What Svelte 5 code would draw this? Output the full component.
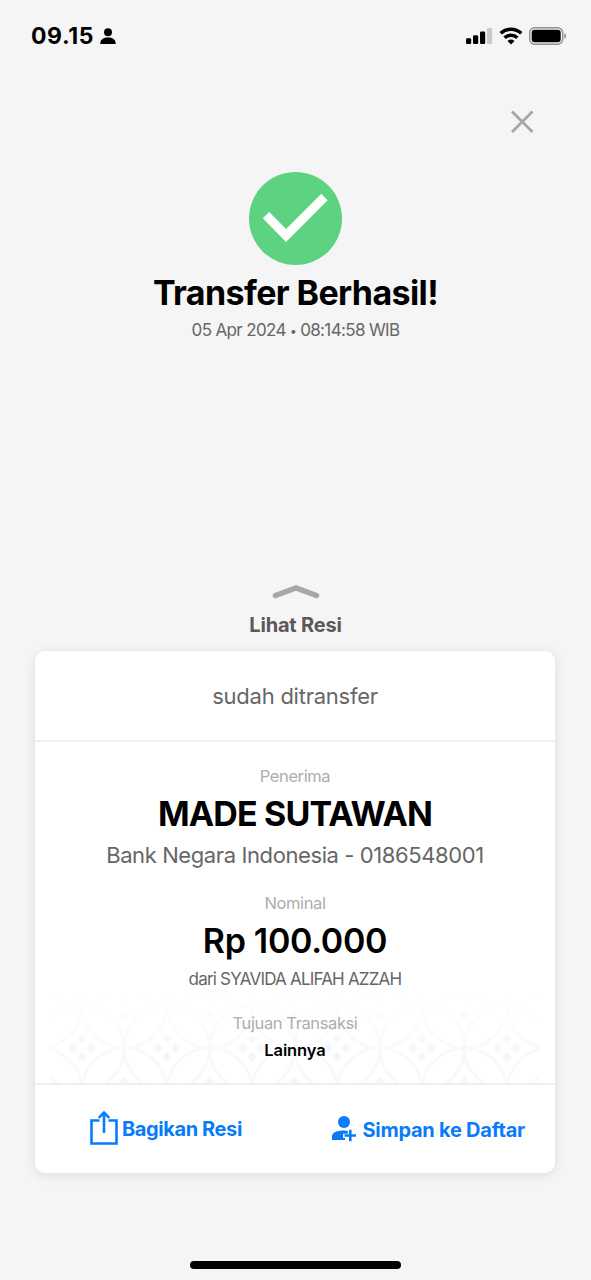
<script lang="ts">
	interface Receipt {
		date: string;
		time: string;
		recipient: string;
		account: string;
		amount: string;
		sender: string;
		purpose: string;
	}

	const receipt: Receipt = {
		date: '05 Apr 2024',
		time: '08:14:58 WIB',
		recipient: 'MADE SUTAWAN',
		account: 'Bank Negara Indonesia - 0186548001',
		amount: 'Rp 100.000',
		sender: 'dari SYAVIDA ALIFAH AZZAH',
		purpose: 'Lainnya'
	};
</script>

<div class="screen">
	<header class="status-bar">
		<div class="clock">
			<span class="time">09.15</span>
			<svg width="16" height="17" viewBox="0 0 16 17">
				<circle cx="8" cy="4.2" r="4" />
				<path d="M.3 15.2C.3 11.5 3.5 9.5 8 9.5s7.700 2 7.700 5.700c0 .6-.4.9-1 .9H1.300c-.6 0-1-.3-1-.9z" />
			</svg>
		</div>
		<div class="indicators">
			<svg width="27" height="18" viewBox="0 0 27 18">
				<rect x="0" y="11.200" width="5.200" height="5.800" rx="1.300" />
				<rect x="7" y="8.200" width="5.200" height="8.800" rx="1.300" />
				<rect x="14" y="4.500" width="5.200" height="12.500" rx="1.300" />
				<rect x="21" y="1" width="5.200" height="16" rx="1.300" fill="#c9c9c9" />
			</svg>
			<svg width="24" height="18" viewBox="0 0 24 18" fill="none" stroke="#000" stroke-width="3.500">
				<path d="M1.700 6.300a14.800 14.800 0 0 1 20.600 0" />
				<path d="M5.600 10.800a9.200 9.200 0 0 1 12.800 0" />
				<path d="M12 17.400 8.500 13.900a5 5 0 0 1 7 0z" fill="#000" stroke="none" />
			</svg>
			<svg width="38" height="18" viewBox="0 0 38 18">
				<rect x=".7" y=".7" width="33" height="16.600" rx="5" fill="none" stroke="#8f8f8f" stroke-width="1.400" />
				<rect x="2.700" y="2.700" width="29" height="12.600" rx="3" />
				<path d="M35.300 6.300c2.400.9 2.400 4.500 0 5.400z" fill="#8f8f8f" />
			</svg>
		</div>
	</header>

	<div class="toolbar">
		<button class="close" aria-label="Tutup">
			<svg width="24" height="24" viewBox="0 0 24 24">
				<path d="M2 1.500 22.500 22M22.500 1.500 2 22" fill="none" stroke="#a8a5a9" stroke-width="2.800" />
			</svg>
		</button>
	</div>

	<section class="result">
		<svg width="93" height="93" viewBox="0 0 93 93">
			<circle cx="46.500" cy="46.500" r="46.500" fill="#5dd280" />
			<path d="M17 43.200 37 63.500 75.500 25" fill="none" stroke="#fff" stroke-width="9" />
		</svg>
		<h1>Transfer Berhasil!</h1>
		<p class="date">{receipt.date} <span class="dot">•</span> {receipt.time}</p>
	</section>

	<button class="expand">
		<svg width="48" height="16" viewBox="0 0 48 16">
			<path d="M3.500 11.500 24 4 44.500 11.500" fill="none" stroke="#aaa5ab" stroke-width="5.500" stroke-linecap="round" />
		</svg>
		<span>Lihat Resi</span>
	</button>

	<main class="card">
		<p class="state">sudah ditransfer</p>

		<div class="details">
			<!-- batik ornament, fades out towards the top -->
			<svg class="ornament" width="490" height="90" viewBox="0 0 490 90">
				<defs>
					<pattern id="kawung" x="-10.500" y="12.500" width="85" height="85" patternUnits="userSpaceOnUse">
						<g fill="none" stroke="#f7f8fc" stroke-width="2.600">
							<circle cx="42.500" cy="42.500" r="42.500" />
							<circle cx="0" cy="0" r="42.500" />
							<circle cx="85" cy="0" r="42.500" />
							<circle cx="0" cy="85" r="42.500" />
							<circle cx="85" cy="85" r="42.500" />
						</g>
						<g fill="#f4f6fc">
							<path d="m42.500 28.500 5 5-5 5-5-5zM42.500 46.500l5 5-5 5-5-5zM33.500 37.500l5 5-5 5-5-5zM51.500 37.500l5 5-5 5-5-5z" />
							<path d="m0 71 5 5-5 5-5-5zM85 71l5 5-5 5-5-5zM0 4l5 5-5 5-5-5zM85 4l5 5-5 5-5-5z" />
						</g>
					</pattern>
					<linearGradient id="fade" x1="0" y1="0" x2="0" y2="1">
						<stop offset="0" stop-color="#fff" stop-opacity=".1" />
						<stop offset=".7" stop-color="#fff" />
					</linearGradient>
					<mask id="ornament-mask">
						<rect width="490" height="90" fill="url(#fade)" />
					</mask>
				</defs>
				<rect width="490" height="90" fill="url(#kawung)" mask="url(#ornament-mask)" />
			</svg>

			<div class="group recipient">
				<span class="label">Penerima</span>
				<strong class="name">{receipt.recipient}</strong>
				<span class="account">{receipt.account}</span>
			</div>
			<div class="group nominal">
				<span class="label">Nominal</span>
				<strong class="amount">{receipt.amount}</strong>
				<span class="sender">{receipt.sender}</span>
			</div>
			<div class="group purpose">
				<span class="label">Tujuan Transaksi</span>
				<strong class="value">{receipt.purpose}</strong>
			</div>
		</div>

		<footer class="actions">
			<button class="share">
				<svg width="28" height="36" viewBox="0 0 28 36" fill="none" stroke="#087cf8" stroke-width="2.600">
					<path d="M9.500 10.500H1.500v23h25v-23h-8" />
					<path d="M14 23V3M8.700 7.800 14 2.500l5.300 5.300" />
				</svg>
				<span>Bagikan Resi</span>
			</button>
			<button class="save">
				<svg width="25" height="26" viewBox="0 0 25 26" fill="#087cf8">
					<circle cx="12" cy="6" r="6" />
					<path d="M0 24v-3.500C0 16.500 5 14.500 12 14.500l3.800.4v2.900h-4.700v4.300h2V24z" />
					<path d="M18.300 13.800v11.400M12.600 19.500H24" fill="none" stroke="#087cf8" stroke-width="2.600" />
				</svg>
				<span>Simpan ke Daftar</span>
			</button>
		</footer>
	</main>

	<div class="home-indicator"></div>
</div>

<style>
	:global(body) {
		background: #f5f5f5;
	}

	.screen {
		box-sizing: border-box;
		width: 591px;
		height: 1280px;
		display: flex;
		flex-direction: column;
		overflow: hidden;
		background: #f5f5f5;
		color: #000;
		font-family: Inter, 'Liberation Sans', sans-serif;
	}

	h1,
	p {
		margin: 0;
	}

	svg {
		display: block;
		flex-shrink: 0;
	}

	button {
		padding: 0;
		border: 0;
		background: none;
		font: inherit;
	}

	.status-bar {
		display: flex;
		justify-content: space-between;
		height: 72px;
		box-sizing: border-box;
		padding: 26px 24px 0 31px;
	}

	.clock,
	.indicators {
		display: flex;
		height: 20px;
		align-items: center;
	}

	.clock {
		gap: 6px;
	}

	.time {
		font-size: 23px;
		font-weight: 700;
		letter-spacing: 0.6px;
	}

	.indicators {
		gap: 6px;
	}

	.toolbar {
		display: flex;
		justify-content: flex-end;
		height: 100px;
		box-sizing: border-box;
		padding: 38px 57px 0 0;
	}

	.close {
		height: 24px;
	}

	.result {
		display: flex;
		flex-direction: column;
		align-items: center;
	}

	h1 {
		margin-top: 8px;
		font-size: 34px;
		font-weight: 700;
		line-height: 40px;
		letter-spacing: -0.6px;
	}

	.date {
		height: 24px;
		margin-top: 5px;
		color: #666;
		font-size: 17px;
		line-height: 24px;
		letter-spacing: -0.65px;
	}

	.dot {
		font-size: 12px;
		line-height: 0;
		vertical-align: 1px;
	}

	.expand {
		display: flex;
		flex-direction: column;
		align-items: center;
		margin-top: 242px;
		color: #5c575a;
		font-size: 20px;
		font-weight: 650;
		line-height: 24px;
		letter-spacing: -0.2px;
	}

	.expand span {
		margin-top: 13px;
	}

	.card {
		width: 520px;
		height: 522px;
		margin: 14px 0 0 35px;
		display: flex;
		flex-direction: column;
		background: #fff;
		border-radius: 10px;
		box-shadow: 0 2px 12px rgba(0, 0, 0, 0.1);
	}

	.state {
		height: 89px;
		border-bottom: 2px solid #efefef;
		color: #666;
		font-size: 22px;
		line-height: 90px;
		letter-spacing: -0.25px;
		text-align: center;
	}

	.details {
		position: relative;
		height: 341px;
		border-bottom: 2px solid #eeeff2;
	}

	.ornament {
		position: absolute;
		left: 15px;
		bottom: 0;
	}

	.group {
		position: relative;
		display: flex;
		flex-direction: column;
		align-items: center;
		white-space: pre;
	}

	.recipient {
		padding-top: 24px;
	}

	.nominal {
		margin-top: 23px;
	}

	.purpose {
		margin-top: 24px;
	}

	.label {
		color: #adadad;
		font-size: 16.5px;
		line-height: 20px;
		letter-spacing: -0.4px;
	}

	.name,
	.amount {
		font-size: 34px;
		line-height: 40px;
	}

	.name {
		margin-top: 8px;
		font-weight: 700;
		letter-spacing: -0.85px;
	}

	.account {
		margin-top: 6px;
		color: #666;
		font-size: 22px;
		line-height: 30px;
		letter-spacing: -0.4px;
	}

	.amount {
		margin-top: 8px;
		font-weight: 600;
		letter-spacing: -0.3px;
	}

	.sender {
		margin-top: 8px;
		color: #666;
		font-size: 17px;
		line-height: 20px;
		letter-spacing: -0.8px;
	}

	.purpose .value {
		margin-top: 6px;
		font-size: 16.5px;
		font-weight: 600;
		line-height: 22px;
		letter-spacing: -0.1px;
	}

	.actions {
		display: flex;
		height: 88px;
		color: #087cf8;
		font-size: 20px;
		font-weight: 650;
	}

	.actions span {
		padding-top: 2px;
	}

	.share,
	.save {
		display: flex;
		align-items: center;
		color: inherit;
		white-space: nowrap;
	}

	.share {
		gap: 4px;
		margin-left: 55px;
		padding-bottom: 2px;
		letter-spacing: -0.4px;
	}

	.save {
		gap: 5px;
		margin: 0 30px 0 auto;
		padding-bottom: 1px;
		letter-spacing: -0.25px;
	}

	.home-indicator {
		width: 211px;
		height: 8px;
		margin: 88px auto 0;
		border-radius: 4px;
		background: #000;
	}
</style>
